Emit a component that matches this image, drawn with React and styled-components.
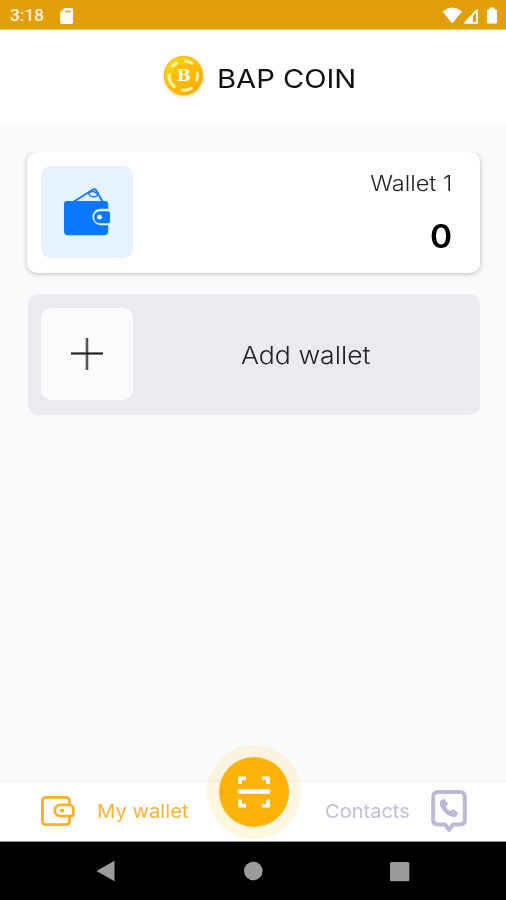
import React from "react";
import styled, { createGlobalStyle } from "styled-components";

const GlobalStyle = createGlobalStyle`
  * { box-sizing: border-box; }
  body { margin: 0; background: #f9fafc; }
`;

const Screen = styled.div`
  width: 506px;
  height: 900px;
  display: flex;
  flex-direction: column;
  overflow: hidden;
  background: #f9fafc;
  font-family: Inter, "Open Sans", sans-serif;
  color: #000;
`;

const StatusBar = styled.div`
  flex: 0 0 30px;
  display: flex;
  align-items: center;
  padding: 2px 8px 0 10px;
  background: #e29f0a;
  border-bottom: 1px solid #efcb7e;
`;

const Clock = styled.span`
  width: 50px;
  font: 500 17.3px/27px Roboto, sans-serif;
  color: #fff3d8;
`;

const StatusIcons = styled.div`
  display: flex;
  align-items: center;
  margin-left: auto;
`;

const Header = styled.header`
  flex: 0 0 94px;
  display: flex;
  align-items: center;
  padding: 0 0 0 161px;
  background: #fff;
`;

const Label = styled.span`
  display: block;
  white-space: nowrap;
  font-size: ${(p) => p.$size}px;
  line-height: 1.2;
  font-weight: ${(p) => p.$weight || 300};
  color: ${(p) => p.$color || "#111"};
  transform: scaleX(${(p) => p.$stretch || 1});
  transform-origin: ${(p) => p.$origin || "left"} center;
`;

const Title = styled.h1`
  margin: 4px 0 0 10px;
`;

const Main = styled.main`
  flex: 1;
  margin-top: 28px;
  padding: 0 26px 0 27px;
  overflow: hidden;
`;

const Card = styled.section`
  display: flex;
  align-items: center;
  height: 121px;
  padding: 0 28px 1px 14px;
  border-radius: 10px;
  background: ${(p) => (p.$muted ? "#eaebf0" : "#fff")};
  box-shadow: ${(p) => (p.$muted ? "none" : "0 1px 5px rgba(0, 0, 0, 0.25)")};
  & + & { margin: 21px 0 0 1px; padding-left: 13px; }
`;

const Tile = styled.div`
  display: grid;
  place-items: center;
  width: 92px;
  height: 92px;
  border-radius: 10px;
  background: ${(p) => p.$bg};
`;

const Balance = styled.div`
  flex: 1;
  display: flex;
  flex-direction: column;
  align-items: flex-end;
  gap: 22px;
  padding-top: 4px;
`;

const AddLabel = styled.div`
  margin: 5px 0 0 108px;
`;

const TabBar = styled.nav`
  flex: 0 0 62px;
  display: flex;
  align-items: center;
  background: #fff;
  border-top: 2px solid #f2f3f5;
  border-bottom: 1px solid #929292;
`;

const Tab = styled.div`
  display: flex;
  align-items: center;
  width: ${(p) => p.$width}px;
  padding-left: ${(p) => p.$inset}px;
  gap: 22px;
`;

const TabText = styled.div`
  width: ${(p) => p.$width}px;
  padding-top: 2px;
`;

const ScanButton = styled.div`
  display: grid;
  place-items: center;
  flex: 0 0 94px;
  height: 94px;
  margin-top: -39px;
  border-radius: 50%;
  background: rgba(255, 205, 70, 0.17);
`;

const ScanDisc = styled.div`
  display: grid;
  place-items: center;
  width: 70px;
  height: 70px;
  border-radius: 50%;
  background: #ffb20a;
`;

const SystemNav = styled.div`
  flex: 0 0 58px;
  display: flex;
  justify-content: space-between;
  align-items: center;
  padding: 0 96px 0 95px;
  background: #000;
`;

const Icon = styled.svg`
  display: block;
  flex: none;
  overflow: visible;
`;

function Coin() {
  return (
    <Icon width="46" height="46" viewBox="0 0 46 46">
      <defs>
        <linearGradient id="coinFace" x2="1" y2="1">
          <stop offset="0" stopColor="#ffdf17" />
          <stop offset="1" stopColor="#ff9f00" />
        </linearGradient>
        <filter id="coinShadow" x="-30%" y="-30%" width="160%" height="160%">
          <feDropShadow dx="0" dy="1.5" stdDeviation="1.4" floodColor="#f5a623" floodOpacity=".4" />
        </filter>
      </defs>
      <circle cx="22.5" cy="21.5" r="19.7" fill="url(#coinFace)" filter="url(#coinShadow)" />
      <circle cx="22.5" cy="21.5" r="19" fill="none" stroke="#f9b80f" strokeWidth="1" />
      <circle cx="22.5" cy="21.5" r="11.3" fill="#fcb90a" opacity=".8" />
      <g fill="none" stroke="#fff4a8" strokeWidth="3" strokeLinecap="round">
        <path d="M11.5 12.5q1.8-2.4 4-3.4" />
        <path d="M24.5 7q3.6.2 6.5 2.4" />
        <path d="M36.5 19q.6 3.6-.8 7" />
        <path d="M30.5 34.3q-4.5 2.6-9 1.8" />
        <path d="M13.2 32.5Q7.5 27.5 8.2 21" />
      </g>
      <text x="22.8" y="27.3" textAnchor="middle" fontFamily="DejaVu Serif, serif" fontWeight="700" fontSize="16.5" fill="#fffbe6">B</text>
    </Icon>
  );
}

function BlueWallet() {
  return (
    <Icon width="48" height="52" viewBox="0 0 48 52">
      <path d="M11 15.5 30 3.6q2-1 3.2.7l6.3 11.2" fill="#e7f2ff" stroke="#1677f5" strokeWidth="1.8" strokeLinejoin="round" />
      <path d="M25.5 7.2q2 4.2 6.3 3.5 4.3-.8 3.2-4.2M25.5 7.2q3.8-2.6 6.5-1t3.3 3.4" fill="none" stroke="#1677f5" strokeWidth="1.5" />
      <path d="M4 15h38q3.2 0 3.2 3.2v4.5h-7.5a8 8 0 0 0 0 16.5h7.5v6q0 4-4 4H5q-4 0-4-4V18q0-3 3-3z" fill="#0878ff" />
      <path d="M37.5 25.2H45q2 0 2 2v8q0 2-2 2h-7.5q-6.3 0-6.3-6t6.3-6z" fill="#0878ff" />
      <circle cx="36.5" cy="31.2" r="2.4" fill="#fff" />
    </Icon>
  );
}

export default function App() {
  return (
    <Screen>
      <GlobalStyle />
      <StatusBar>
        <Clock>3:18</Clock>
        <Icon width="14" height="18" viewBox="0 0 14 18">
          <path d="M4.5 1H11.6Q13 1 13 2.4V15.6Q13 17 11.6 17H1.4Q0 17 0 15.6V5.5Z" fill="#fffaf0" />
          <path d="M5 4.5h6" stroke="#d8a742" strokeWidth="1.6" />
        </Icon>
        <StatusIcons>
          <Icon width="56" height="20" viewBox="0 0 56 20">
            <path d="M1.2 5.6Q10.3-1.6 19.4 5.6L10.3 17Z" fill="#fff" stroke="#fff" strokeLinejoin="round" />
            <path d="M23 16.8 35 4.2v12.6Z" fill="none" stroke="#fff" strokeWidth="1.8" strokeLinejoin="round" />
            <path d="M23 17l8-8.5V17z" fill="#fff" />
            <path d="M47.5 1.5h5v2h1.3q1.2 0 1.2 1.2v11.5q0 1.3-1.2 1.3h-7.6q-1.2 0-1.2-1.3V4.7q0-1.2 1.2-1.2h1.3z" fill="#fff" />
          </Icon>
        </StatusIcons>
      </StatusBar>
      <Header>
        <Coin />
        <Title><Label $size={26} $weight={400} $stretch={1.12}>BAP COIN</Label></Title>
      </Header>
      <Main>
        <Card>
          <Tile $bg="#e6f2ff"><BlueWallet /></Tile>
          <Balance>
            <Label $size={21} $stretch={1.12} $origin="right" $color="#222">Wallet 1</Label>
            <Label $size={32} $weight={600} $stretch={1.05} $origin="right" $color="#000">0</Label>
          </Balance>
        </Card>
        <Card $muted>
          <Tile $bg="#fafbfd">
            <Icon width="34" height="34" viewBox="0 0 34 34">
              <path d="M17 1v32" stroke="#555" strokeWidth="2.6" />
              <path d="M1 16.5h32" stroke="#222" strokeWidth="2.2" />
            </Icon>
          </Tile>
          <AddLabel><Label $size={24} $stretch={1.11} $color="#222">Add wallet</Label></AddLabel>
        </Card>
      </Main>
      <TabBar>
        <Tab $width={207} $inset={41}>
          <Icon width="34" height="32" viewBox="0 0 34 32">
            <g fill="none" stroke="#fab02b" strokeWidth="2.8" strokeLinejoin="round">
              <path d="M28.5 8.5V5q0-3.6-3.6-3.6H5Q1.4 1.4 1.4 5v20Q1.4 28.6 5 28.6h19.9q3.6 0 3.6-3.6v-4.5" />
              <path d="M27.5 8.9q4.8 0 4.8 4.2v4.6q0 2.5-2.5 2.5H19.4a5.65 5.65 0 0 1 0-11.3z" />
            </g>
            <circle cx="21" cy="14.6" r="2.1" fill="#fab02b" />
          </Icon>
          <TabText $width={100}><Label $size={19} $stretch={1.065} $weight={400} $color="#f9b233">My wallet</Label></TabText>
        </Tab>
        <ScanButton>
          <ScanDisc>
            <Icon width="32" height="32" viewBox="0 0 32 32">
              <path d="M2 8V2.3H8M24 2.3h6V8M2 23.5v6.2H8M24 29.7h6v-6.2" fill="none" stroke="#fff" strokeWidth="3.6" />
              <path d="M0 15.5h32" stroke="#fff" strokeWidth="4.6" />
            </Icon>
          </ScanDisc>
        </ScanButton>
        <Tab $width={205} $inset={24}>
          <TabText $width={84}><Label $size={19} $stretch={1.055} $weight={400} $color="#c2bdd8">Contacts</Label></TabText>
          <Icon width="36" height="44" viewBox="0 0 36 44">
            <path d="M7 2h22q4.8 0 4.8 5v23q0 4.5-4.8 4.5h-7l-4 5.5-4-5.5H7q-4.8 0-4.8-4.5V7q0-5 4.8-5z" fill="none" stroke="#bdb8d6" strokeWidth="4" strokeLinejoin="round" />
            <path d="M9.5 10.5 13 8.8l4 5-2.2 3q1.3 3 4.2 4.3l3-2 5.2 3.7-2 3.6q-2 1.2-5 .2-8-3-11-10.5-1-3.4.3-5.6z" fill="#bdb8d6" />
          </Icon>
        </Tab>
      </TabBar>
      <SystemNav>
        <Icon width="20" height="22" viewBox="0 0 20 22"><path d="M1.5 11 19.5.8v20.4z" fill="#9c9c9c" /></Icon>
        <Icon width="20" height="20" viewBox="0 0 20 20"><circle cx="11.3" cy="10" r="9.3" fill="#9c9c9c" /></Icon>
        <Icon width="21" height="21" viewBox="0 0 21 21"><rect x="1" y="1" width="19.3" height="19.3" rx="1.5" fill="#9c9c9c" /></Icon>
      </SystemNav>
    </Screen>
  );
}
